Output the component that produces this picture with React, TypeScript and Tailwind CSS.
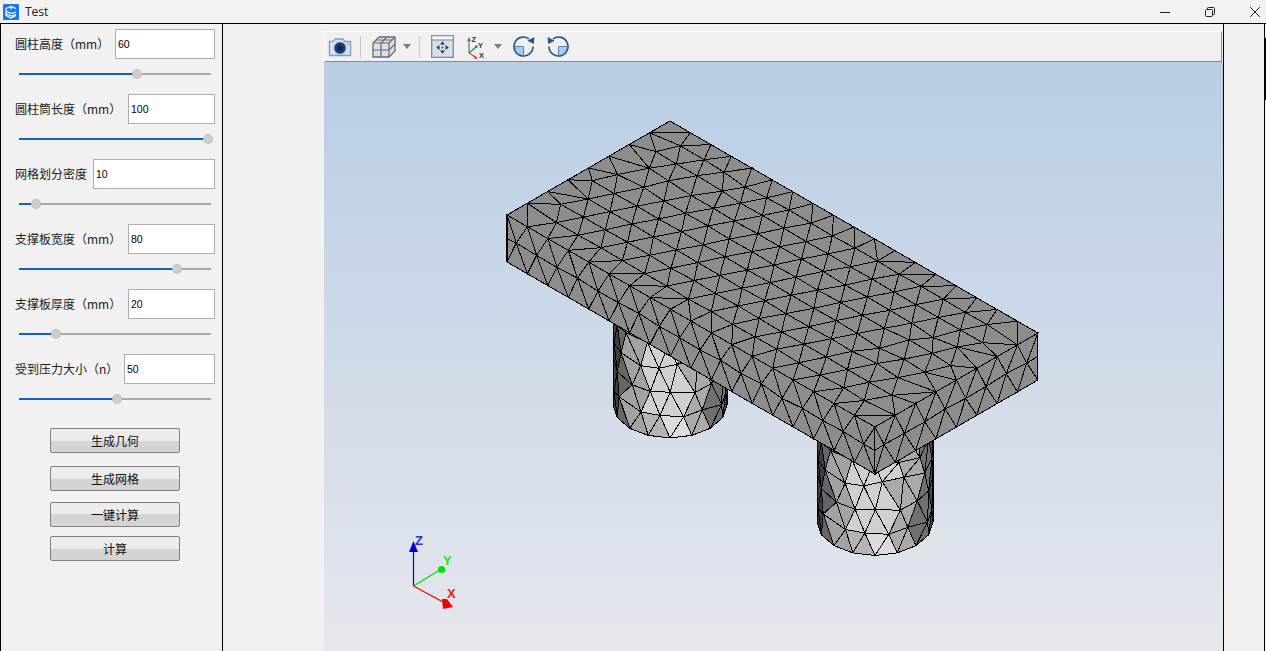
type P = [number, number];

const params = [
  { label: "圆柱高度（mm）", value: "60", input: "w-[100px]", thumb: 118 },
  { label: "圆柱筒长度（mm）", value: "100", input: "w-[87px]", thumb: 189 },
  { label: "网格划分密度", value: "10", input: "w-[122px]", thumb: 17 },
  { label: "支撑板宽度（mm）", value: "80", input: "w-[87px]", thumb: 158 },
  { label: "支撑板厚度（mm）", value: "20", input: "w-[87px]", thumb: 37 },
  { label: "受到压力大小（n）", value: "50", input: "w-[91px]", thumb: 98 },
];

const buttons = [
  { text: "生成几何", margin: "mt-[9px]" },
  { text: "生成网格", margin: "mt-[13px]" },
  { text: "一键计算", margin: "mt-[11px]" },
  { text: "计算", margin: "mt-[9px]" },
];

// plate corners, in page pixels
const O: P = [670, 121];
const U: P = [20.44, 11.78];
const V: P = [-20.38, 11.75];
const plate = (s: number, t: number): P => [O[0] + s * U[0] + t * V[0], O[1] + s * U[1] + t * V[1]];
const THICK = 47;

function rnd(a: number, b: number) {
  const x = Math.sin(a * 127.1 + b * 311.7) * 43758.5453;
  return x - Math.floor(x) - 0.5;
}

function delaunay(pts: P[]) {
  const n = pts.length;
  const all: P[] = [...pts, [-2000, -2000], [4000, -2000], [0, 4000]];
  let tris: number[][] = [[n, n + 1, n + 2]];
  const inCircle = (tri: number[], p: P) => {
    const [a, b, c] = tri.map((i) => all[i]);
    const d = 2 * (a[0] * (b[1] - c[1]) + b[0] * (c[1] - a[1]) + c[0] * (a[1] - b[1]));
    if (Math.abs(d) < 1e-12) return false;
    const a2 = a[0] * a[0] + a[1] * a[1];
    const b2 = b[0] * b[0] + b[1] * b[1];
    const c2 = c[0] * c[0] + c[1] * c[1];
    const ux = (a2 * (b[1] - c[1]) + b2 * (c[1] - a[1]) + c2 * (a[1] - b[1])) / d;
    const uy = (a2 * (c[0] - b[0]) + b2 * (a[0] - c[0]) + c2 * (b[0] - a[0])) / d;
    return Math.hypot(p[0] - ux, p[1] - uy) < Math.hypot(a[0] - ux, a[1] - uy);
  };
  for (let i = 0; i < n; i++) {
    const bad: number[][] = [];
    const good: number[][] = [];
    for (const t of tris) (inCircle(t, pts[i]) ? bad : good).push(t);
    const edges = new Map<string, [number, number, number]>();
    for (const t of bad) {
      for (let k = 0; k < 3; k++) {
        const a = t[k];
        const b = t[(k + 1) % 3];
        const key = a < b ? `${a}_${b}` : `${b}_${a}`;
        const e = edges.get(key);
        edges.set(key, [a, b, e ? e[2] + 1 : 1]);
      }
    }
    tris = good;
    edges.forEach((e) => {
      if (e[2] === 1) tris.push([e[0], e[1], i]);
    });
  }
  return tris.filter((t) => t.every((i) => i < n));
}

function buildTopMesh() {
  const pts: P[] = [];
  for (let s = 0; s <= 18; s++) {
    pts.push([s + rnd(s, 1) * 1e-3, 0 - Math.abs(rnd(s, 2)) * 1e-3]);
    pts.push([s + rnd(s, 3) * 1e-3, 8 + Math.abs(rnd(s, 4)) * 1e-3]);
  }
  for (let t = 1; t < 8; t++) {
    pts.push([0 - Math.abs(rnd(t, 5)) * 1e-3, t + rnd(t, 6) * 1e-3]);
    pts.push([18 + Math.abs(rnd(t, 7)) * 1e-3, t + rnd(t, 8) * 1e-3]);
  }
  for (let k = 1; k <= 8; k++) {
    const t = 8 - k * 0.889;
    const shift = ((k * 0.6) % 1) * -1.08;
    for (let j = 0; j < 20; j++) {
      const s = j * 1.08 + shift;
      if (s < 0.55 || s > 17.45) continue;
      const rough = s + t < 6 ? 0.3 : s > 14.5 && t > 2 && t < 6 ? 0.22 : 0.05;
      pts.push([s + rnd(j, k) * rough, t + rnd(k, j + 30) * rough]);
    }
  }
  const tris = delaunay(pts);
  let d = "";
  for (const t of tris) {
    const [a, b, c] = t.map((i) => plate(pts[i][0], pts[i][1]));
    d += `M${a[0].toFixed(1)} ${a[1].toFixed(1)}L${b[0].toFixed(1)} ${b[1].toFixed(1)}L${c[0].toFixed(1)} ${c[1].toFixed(1)}Z`;
  }
  return d;
}

function sideMesh(a: P, b: P, n: number) {
  const at = (f: number, dy: number): P => [a[0] + (b[0] - a[0]) * f, a[1] + (b[1] - a[1]) * f + dy];
  const mid: P[] = [at(0, THICK / 2)];
  for (let i = 0; i < n; i++) mid.push(at((i + 0.45) / n, THICK / 2 + rnd(i, 9) * 3));
  mid.push(at(1, THICK / 2));
  let d = "";
  const tri = (p: P, q: P, r: P) => {
    d += `M${p[0].toFixed(1)} ${p[1].toFixed(1)}L${q[0].toFixed(1)} ${q[1].toFixed(1)}L${r[0].toFixed(1)} ${r[1].toFixed(1)}Z`;
  };
  for (let i = 0; i < n; i++) {
    tri(at(i / n, 0), at((i + 1) / n, 0), mid[i + 1]);
    tri(at(i / n, THICK), at((i + 1) / n, THICK), mid[i + 1]);
  }
  for (let i = 0; i <= n; i++) {
    tri(at(i / n, 0), mid[i], mid[i + 1]);
    tri(at(i / n, THICK), mid[i], mid[i + 1]);
  }
  return d;
}

function shade(s: number, low: boolean) {
  if (s < -0.9) return "#3f3f3f";
  if (s < -0.78) return "#666666";
  if (s < -0.5) return "#a2a2a2";
  if (low && s < -0.05) return "#b4b4b4";
  if (s < 0.35) return low ? "#dcdcdc" : "#d0d0d0";
  if (s < 0.72) return "#aaaaaa";
  if (s < 0.95) return "#707070";
  return "#4a4a4a";
}

function cylinderTris(cx: number, cy: number, r: number) {
  const ry = r * 0.577;
  const h = 23;
  const node = (i: number, k: number): P => {
    const th = ((-90 + 22.5 * i + (k % 2 ? 11.25 : 0)) * Math.PI) / 180;
    const c = th * 2 > Math.PI ? 1 : th * 2 < -Math.PI ? -1 : Math.sin(th);
    const wobble = k > 0 && k < 6 ? rnd(i, k) : 0;
    return [cx + r * c + wobble * (Math.abs(c) < 0.9 ? 9 : 0), cy + ry * Math.cos(th) - k * h + wobble * 9];
  };
  const out: { pts: string; fill: string }[] = [];
  const add = (a: P, b: P, c: P, k: number) => {
    const s = ((a[0] + b[0] + c[0]) / 3 - cx) / r;
    out.push({
      pts: [a, b, c].map((p) => `${p[0].toFixed(1)},${p[1].toFixed(1)}`).join(" "),
      fill: shade(s, k === 0),
    });
  };
  for (let k = 0; k < 6; k++) {
    for (let i = -1; i < 9; i++) {
      if (k % 2 === 0) {
        add(node(i, k), node(i + 1, k), node(i, k + 1), k);
        add(node(i + 1, k), node(i, k + 1), node(i + 1, k + 1), k);
      } else {
        add(node(i, k), node(i + 1, k), node(i + 1, k + 1), k);
        add(node(i, k), node(i, k + 1), node(i + 1, k + 1), k);
      }
    }
  }
  return out;
}

const topMesh = buildTopMesh();
const frontMesh = sideMesh(plate(0, 8), plate(18, 8), 18);
const endMesh = sideMesh(plate(18, 8), plate(18, 0), 8);
const backCyl = cylinderTris(670, 405, 57);
const frontCyl = cylinderTris(875, 522, 58);

function Scene() {
  const l = plate(0, 8);
  const f = plate(18, 8);
  const r = plate(18, 0);
  const outline = `${O[0]},${O[1]} ${r[0]},${r[1]} ${r[0]},${r[1] + THICK} ${f[0]},${f[1] + THICK} ${l[0]},${l[1] + THICK} ${l[0]},${l[1]}`;
  return (
    <svg viewBox="324 62 899 589" className="block w-[899px] h-[589px]" shapeRendering="crispEdges">
      {[backCyl, frontCyl].map((tris, n) => (
        <g key={n} stroke="#000" strokeWidth="1" strokeLinejoin="round">
          {tris.map((t, i) => (
            <polygon key={i} points={t.pts} fill={t.fill} />
          ))}
        </g>
      ))}
      <polygon points={outline} fill="#8c8c8c" />
      <path d={frontMesh + endMesh + topMesh} fill="none" stroke="#000" strokeWidth="1" />
      <polygon points={outline} fill="none" stroke="#000" strokeWidth="1" />

      <g shapeRendering="auto" fontFamily="'Liberation Sans', sans-serif" fontWeight="700" fontSize="13">
        <line x1="413.5" y1="586" x2="413.5" y2="548" stroke="#0000e0" strokeWidth="1.2" />
        <polygon points="413.5,541 418,552 409,552" fill="#0000e0" />
        <text x="415" y="545" fill="#2a2ae8">Z</text>
        <line x1="413.5" y1="586" x2="438" y2="571" stroke="#00e000" strokeWidth="1.2" />
        <circle cx="441.5" cy="569.5" r="3.6" fill="#00e000" />
        <text x="443" y="565" fill="#22e022">Y</text>
        <line x1="413.5" y1="586" x2="443" y2="602" stroke="#e80000" strokeWidth="1.2" />
        <polygon points="453,607 443,609 442,599 447,599" fill="#f00000" />
        <text x="447" y="598" fill="#f02020">X</text>
      </g>
    </svg>
  );
}

function Slider({ thumb }: { thumb: number }) {
  return (
    <div className="relative ml-[4px] w-[192px] h-[2px] mt-[14px] bg-[#a9a9a9]">
      <div className="h-[2px] bg-[#0f64b8]" style={{ width: thumb }} />
      <div
        className="absolute top-[-4px] w-[10px] h-[10px] rounded-full bg-[#cdcdcd] border border-dotted border-[#b4b4b4]"
        style={{ left: thumb - 5 }}
      />
    </div>
  );
}

function Caret() {
  return (
    <svg width="8" height="5" viewBox="0 0 8 5" className="block">
      <path d="M0 0h8L4 5z" fill="#7d7d7d" />
    </svg>
  );
}

function Sep() {
  return <div className="w-px h-[22px] bg-[#c8c8c8]" />;
}

function CameraIcon() {
  return (
    <svg width="24" height="20" viewBox="0 0 24 20" className="block">
      <path d="M1.5 4.5h4l1.5-2.5h8l1.5 2.5h6v14h-21z" fill="#dbe5f1" stroke="#7f9bc0" strokeWidth="1.4" strokeLinejoin="round" />
      <circle cx="12" cy="11" r="6" fill="#1d3f75" stroke="#7f9cc2" />
      <circle cx="12" cy="11" r="3" fill="#0e2a57" />
      <rect x="19" y="6.5" width="2" height="1.5" fill="#8ba4c6" />
    </svg>
  );
}

function CubeIcon() {
  return (
    <svg width="24" height="22" viewBox="0 0 24 22" className="block">
      <path d="M1 7l6-6h16v14l-6 6H1z" fill="#dcdfe3" stroke="#666c76" strokeWidth="1.3" strokeLinejoin="round" />
      <path d="M1 7h16v14M17 7l6-6M9 7v14M1 14h16M9 7l6-6M4 4h16M17 14l6-6" fill="none" stroke="#666c76" strokeWidth="1.2" />
    </svg>
  );
}

function FitIcon() {
  return (
    <svg width="23" height="23" viewBox="0 0 23 23" className="block">
      <rect x="0.7" y="0.7" width="21.6" height="21.6" fill="#d9dee5" stroke="#7b8ba3" strokeWidth="1.3" />
      <rect x="1.4" y="1.4" width="20.2" height="3" fill="#f3f5f8" />
      <path d="M0.7 5h21.6" stroke="#7b8ba3" />
      <path d="M11.5 9.5l-2.4 0 2.4-3.2 2.4 3.2zM11.5 15.5l-2.4 0 2.4 3.2 2.4-3.2zM8.5 12.5v-2.4l-3.2 2.4 3.2 2.4zM14.5 12.5v-2.4l3.2 2.4-3.2 2.4z" fill="#1e3a66" />
      <circle cx="11.5" cy="12.5" r="0.9" fill="#1e3a66" />
    </svg>
  );
}

function AxisIcon() {
  return (
    <svg width="22" height="24" viewBox="0 0 22 24" className="block" fontFamily="'Liberation Sans', sans-serif" fontSize="7.5" fontWeight="700">
      <path d="M4 18V5" stroke="#5d6f88" strokeWidth="1.2" />
      <path d="M4 2l2 4H2z" fill="#5d6f88" />
      <path d="M4 18l7-6" stroke="#1d9440" strokeWidth="1.3" />
      <path d="M13 10l-1.2 3.6-2.4-2.6z" fill="#1d9440" />
      <path d="M4 18l7 4.5" stroke="#e43a32" strokeWidth="1.3" />
      <path d="M13 24l-4-.4 1.6-2.8z" fill="#e43a32" />
      <text x="6.5" y="7" fill="#333">Z</text>
      <text x="13" y="13" fill="#333">Y</text>
      <text x="14" y="23" fill="#333">X</text>
    </svg>
  );
}

function RotateIcon({ flip }: { flip?: boolean }) {
  return (
    <svg width="23" height="23" viewBox="0 0 23 23" className={flip ? "block -scale-x-100" : "block"}>
      <path d="M11.5 11.5h-9.5a9.5 9.5 0 0 0 9.5 9.5z" fill="#a9cdee" />
      <path d="M17 3.8A9.5 9.5 0 1 0 21 11.5" fill="none" stroke="#2a5585" strokeWidth="1.6" />
      <path d="M22.5 2l-.7 7-6.5-3.2z" fill="#2a5585" />
      <path d="M11.5 11.5v9.5M11.5 11.5h-9.5" stroke="#4a86c0" strokeWidth="1" />
    </svg>
  );
}

export default function App() {
  return (
    <div className="w-[1266px] h-[651px] overflow-hidden flex flex-col bg-[#f1f1f1] text-black font-['Noto_Sans_CJK_SC','Noto_Sans',sans-serif]">
      <div className="h-[24px] shrink-0 flex items-center bg-[#f3f2f0] border-b border-black">
        <svg width="16" height="16" viewBox="0 0 16 16" className="ml-[3px]">
          <rect width="16" height="16" rx="1" fill="#1a78e6" />
          <path d="M3 4.5l5-2 5 2M3 4.5v7l5 2.5 5-2.5M3 7.5l6 2 4-1.5M3 10l6 2 4-1.5M8 2.5v3" fill="none" stroke="#fff" strokeWidth="1.2" />
        </svg>
        <span className="ml-[6px] text-[12px] leading-none text-[#222] font-['Open_Sans',sans-serif]">Test</span>
        <div className="ml-auto flex items-center gap-[35px] pr-[6px]">
          <svg width="10" height="10" viewBox="0 0 10 10">
            <path d="M0 5.5h10" stroke="#222" />
          </svg>
          <svg width="10" height="10" viewBox="0 0 10 10">
            <path d="M2.5 2V1.2q0-.7.7-.7h5.1q1.2 0 1.2 1.2v5.1q0 .7-.7.7H8" fill="none" stroke="#222" />
            <rect x="0.5" y="2.5" width="7" height="7" rx="1" fill="none" stroke="#222" />
          </svg>
          <svg width="10" height="10" viewBox="0 0 10 10">
            <path d="M0 0l10 10M10 0L0 10" stroke="#222" />
          </svg>
        </div>
      </div>

      <div className="flex-1 flex min-h-0">
        <div className="w-[223px] shrink-0 border-l border-r border-black pt-[5px] pl-[14px]">
          {params.map((p) => (
            <div key={p.label} className="h-[65px]">
              <div className="w-[200px] h-[30px] flex items-center justify-between">
                <span className="text-[12px] text-[#222] whitespace-nowrap">{p.label}</span>
                <input
                  readOnly
                  value={p.value}
                  className={`${p.input} h-[30px] bg-white border border-[#adadad] pl-[2px] text-[10.5px] outline-none font-['Liberation_Sans',sans-serif]`}
                />
              </div>
              <Slider thumb={p.thumb} />
            </div>
          ))}
          <div className="ml-[35px] flex flex-col">
            {buttons.map((b) => (
              <div
                key={b.text}
                className={`${b.margin} w-[130px] h-[25px] flex items-center justify-center rounded-[2px] border border-[#808080] bg-linear-to-b from-[#ececec] from-50% to-[#d4d4d4] to-50% text-[12px] text-[#111]`}
              >
                {b.text}
              </div>
            ))}
          </div>
        </div>

        <div className="w-[1000px] shrink-0 pl-[101px] pt-[7px] flex flex-col">
          <div className="h-[31px] w-[898px] shrink-0 flex items-center bg-[#f0f0f0] border-t border-l border-white border-r-[#8a8a8a] border-b-[#8a8a8a] border-r border-b pl-[3px]">
            <CameraIcon />
            <div className="ml-[8px]">
              <Sep />
            </div>
            <div className="ml-[11px]">
              <CubeIcon />
            </div>
            <div className="ml-[7px]">
              <Caret />
            </div>
            <div className="ml-[8px]">
              <Sep />
            </div>
            <div className="ml-[11px]">
              <FitIcon />
            </div>
            <div className="ml-[11px]">
              <AxisIcon />
            </div>
            <div className="ml-[7px]">
              <Caret />
            </div>
            <div className="ml-[10px]">
              <RotateIcon />
            </div>
            <div className="ml-[12px]">
              <RotateIcon flip />
            </div>
          </div>
          <div className="flex-1 w-[899px] bg-linear-to-b from-[#b9cde5] to-[#e5e7ec]">
            <Scene />
          </div>
        </div>

        <div className="w-[42px] shrink-0 border-l border-r border-black" />
        <div className="w-px shrink-0 flex flex-col">
          <div className="h-[14px] bg-white" />
          <div className="h-[62px] bg-black" />
        </div>
      </div>
    </div>
  );
}
